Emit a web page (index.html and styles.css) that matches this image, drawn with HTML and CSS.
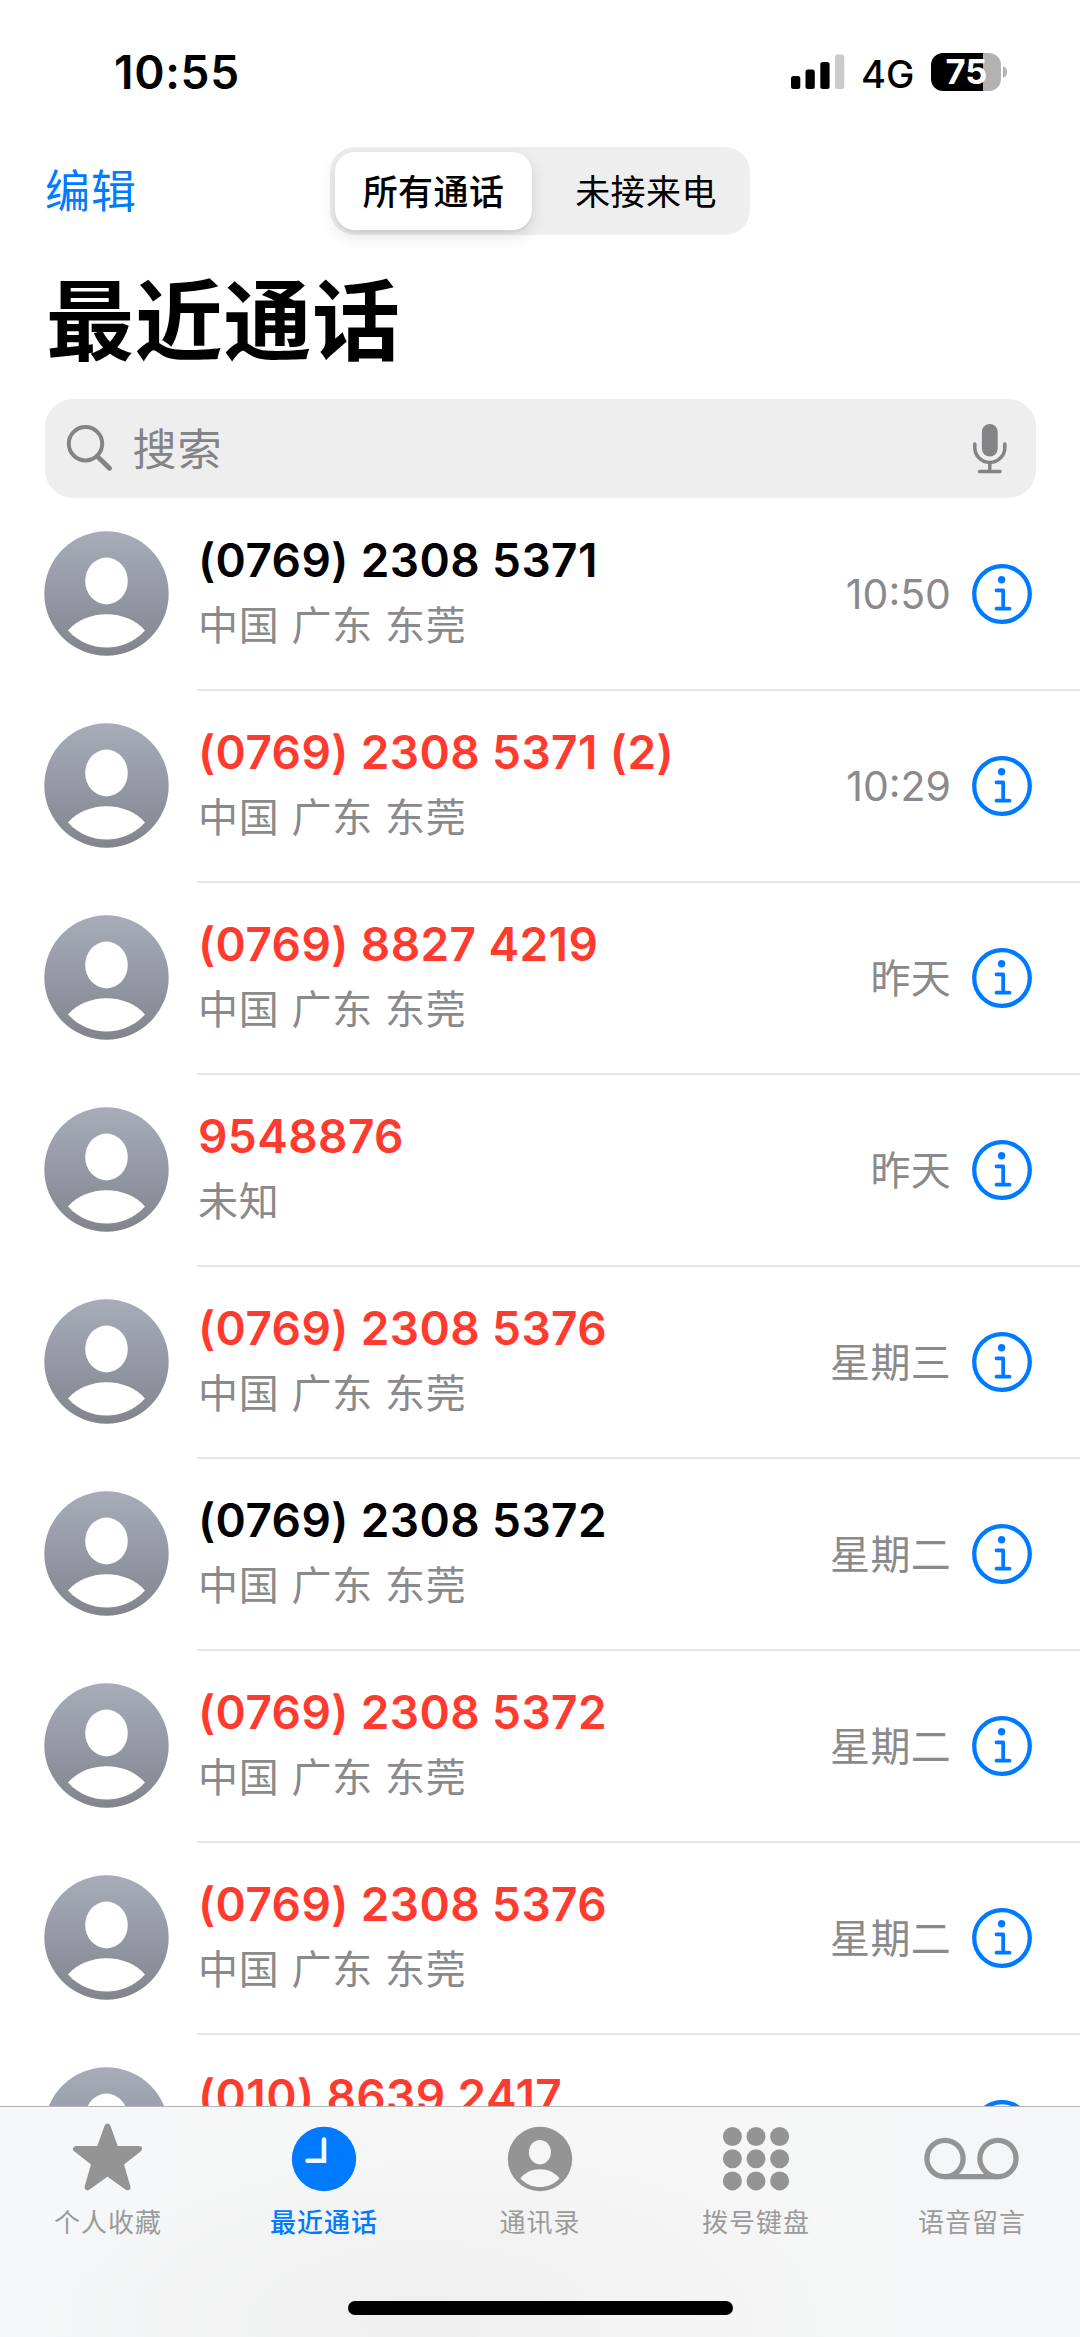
FILE: index.html
```
<!DOCTYPE html>
<html lang="zh-CN">
<head>
<meta charset="utf-8">
<title>最近通话</title>
<link rel="stylesheet" href="styles.css">
</head>
<body>
<svg class="defs" aria-hidden="true">
  <defs>
    <linearGradient id="avatar-fill" x1="0" y1="0" x2="0" y2="1">
      <stop offset="0" stop-color="#a6adb8"/>
      <stop offset="0.6" stop-color="#9194a1"/>
      <stop offset="1" stop-color="#83858d"/>
    </linearGradient>
    <symbol id="avatar" viewBox="0 0 125 125">
      <circle cx="62.5" cy="62.5" r="62.2" fill="url(#avatar-fill)"/>
      <ellipse cx="62.5" cy="50" rx="21.3" ry="23.4" fill="#fff"/>
      <path d="M24 99.5C33 89 47 83.2 62.5 83.2S92 89 101 99.5C91 110.5 77 116.5 62.5 116.5S34 110.5 24 99.5Z" fill="#fff"/>
    </symbol>
    <symbol id="info" viewBox="0 0 60 60">
      <circle cx="30" cy="30" r="27.8" fill="none" stroke="#007aff" stroke-width="4.3"/>
      <circle cx="29.6" cy="15.7" r="3.7" fill="#007aff"/>
      <path d="M24.5 26.3H31.2V44.7M24.5 44.7H37.5" fill="none" stroke="#007aff" stroke-width="3.8" stroke-linecap="round" stroke-linejoin="round"/>
    </symbol>
  </defs>
</svg>
<div class="screen">
  <header class="status">
    <span class="clock">10:55</span>
    <div class="indicators">
      <svg class="signal" viewBox="0 0 54 36">
        <rect x="0" y="22" width="9.3" height="13" rx="2.5"/>
        <rect x="14.5" y="15.5" width="9.3" height="19.5" rx="2.5"/>
        <rect x="29.3" y="8" width="9.3" height="27" rx="2.5"/>
        <rect x="44" y="0.5" width="9.3" height="34.5" rx="2.5" fill="#cbcbcb"/>
      </svg>
      <span class="network">4G</span>
      <div class="battery"><span class="battery-level">75</span></div>
      <svg class="battery-cap" viewBox="0 0 4 12"><path d="M0 0C2.5 1 4 3 4 6S2.5 11 0 12Z" fill="#b2b2b2"/></svg>
    </div>
  </header>

  <nav class="toolbar">
    <a class="edit">编辑</a>
    <div class="segments">
      <span class="segment selected">所有通话</span>
      <span class="segment">未接来电</span>
    </div>
  </nav>

  <h1 class="title">最近通话</h1>

  <div class="search">
    <svg class="search-icon" viewBox="0 0 48 48">
      <circle cx="20.5" cy="20.7" r="16.7"/>
      <path d="M32.5 33.5L44.5 45.2" stroke-width="5"/>
    </svg>
    <span class="search-text">搜索</span>
    <svg class="mic" viewBox="0 0 34 50">
      <rect x="8.9" y="0" width="15.8" height="32.5" rx="7.9"/>
      <path d="M1.8 20V23.5A15 15 0 0 0 31.8 23.5V20M16.8 38.5V47M6.5 47.5H27"/>
    </svg>
  </div>

  <main class="calls">
    <div class="call"><svg class="avatar"><use href="#avatar"/></svg><div class="entry"><div class="who"><span class="number">(0769) 2308 5371</span><span class="place">中国 广东 东莞</span></div><span class="when">10:50</span><svg class="info"><use href="#info"/></svg></div></div>
    <div class="call missed"><svg class="avatar"><use href="#avatar"/></svg><div class="entry"><div class="who"><span class="number">(0769) 2308 5371 (2)</span><span class="place">中国 广东 东莞</span></div><span class="when">10:29</span><svg class="info"><use href="#info"/></svg></div></div>
    <div class="call missed"><svg class="avatar"><use href="#avatar"/></svg><div class="entry"><div class="who"><span class="number">(0769) 8827 4219</span><span class="place">中国 广东 东莞</span></div><span class="when day">昨天</span><svg class="info"><use href="#info"/></svg></div></div>
    <div class="call missed"><svg class="avatar"><use href="#avatar"/></svg><div class="entry"><div class="who"><span class="number">9548876</span><span class="place">未知</span></div><span class="when day">昨天</span><svg class="info"><use href="#info"/></svg></div></div>
    <div class="call missed"><svg class="avatar"><use href="#avatar"/></svg><div class="entry"><div class="who"><span class="number">(0769) 2308 5376</span><span class="place">中国 广东 东莞</span></div><span class="when day">星期三</span><svg class="info"><use href="#info"/></svg></div></div>
    <div class="call"><svg class="avatar"><use href="#avatar"/></svg><div class="entry"><div class="who"><span class="number">(0769) 2308 5372</span><span class="place">中国 广东 东莞</span></div><span class="when day">星期二</span><svg class="info"><use href="#info"/></svg></div></div>
    <div class="call missed"><svg class="avatar"><use href="#avatar"/></svg><div class="entry"><div class="who"><span class="number">(0769) 2308 5372</span><span class="place">中国 广东 东莞</span></div><span class="when day">星期二</span><svg class="info"><use href="#info"/></svg></div></div>
    <div class="call missed"><svg class="avatar"><use href="#avatar"/></svg><div class="entry"><div class="who"><span class="number">(0769) 2308 5376</span><span class="place">中国 广东 东莞</span></div><span class="when day">星期二</span><svg class="info"><use href="#info"/></svg></div></div>
    <div class="call missed"><svg class="avatar"><use href="#avatar"/></svg><div class="entry"><div class="who"><span class="number">(010) 8639 2417</span></div><svg class="info"><use href="#info"/></svg></div></div>
  </main>

  <footer class="dock">
    <div class="tabs">
      <div class="tab">
        <svg class="tab-icon" viewBox="0 0 92 72">
          <path d="M45.500 6.500L53.600 29H77L58.600 43.400L65.500 67.300L45.500 53L25.500 67.300L32.400 43.400L14 29H37.400Z" fill="#949494" stroke="#949494" stroke-width="6" stroke-linejoin="round"/>
        </svg>
        <span>个人收藏</span>
      </div>
      <div class="tab active">
        <svg class="tab-icon" viewBox="0 0 92 72">
          <circle cx="46" cy="39" r="32.2" fill="#007aff"/>
          <path d="M46 19.5V40.7H29.5" fill="none" stroke="#f7f7f7" stroke-width="4.6" stroke-linecap="round" stroke-linejoin="miter"/>
        </svg>
        <span>最近通话</span>
      </div>
      <div class="tab">
        <svg class="tab-icon" viewBox="0 0 92 72">
          <circle cx="46" cy="39" r="32.2" fill="#949494"/>
          <ellipse cx="45.9" cy="32.2" rx="11" ry="12.2" fill="#f6f6f6"/>
          <path d="M26.3 58.4C31 52.5 38 49.3 45.9 49.3S61 52.5 65.5 58.4C60 64.2 53 67 45.9 67S32 64.2 26.3 58.4Z" fill="#f6f6f6"/>
        </svg>
        <span>通讯录</span>
      </div>
      <div class="tab">
        <svg class="tab-icon" viewBox="0 0 92 72" fill="#949494">
          <circle cx="22.4" cy="16.5" r="9.5"/><circle cx="46" cy="16.5" r="9.5"/><circle cx="69.6" cy="16.5" r="9.5"/>
          <circle cx="22.4" cy="38.7" r="9.5"/><circle cx="46" cy="38.7" r="9.5"/><circle cx="69.6" cy="38.7" r="9.5"/>
          <circle cx="22.4" cy="60.9" r="9.5"/><circle cx="46" cy="60.9" r="9.5"/><circle cx="69.6" cy="60.9" r="9.5"/>
        </svg>
        <span>拨号键盘</span>
      </div>
      <div class="tab">
        <svg class="tab-icon" viewBox="0 0 92 72" fill="none" stroke="#949494" stroke-width="5.3">
          <circle cx="19" cy="38.5" r="18.1"/><circle cx="72" cy="38.5" r="18.1"/><path d="M19 56.6H72"/>
        </svg>
        <span>语音留言</span>
      </div>
    </div>
    <div class="home-indicator"></div>
  </footer>
</div>
</body>
</html>
```
FILE: styles.css
```
* { box-sizing: border-box; }

body {
  margin: 0;
  background: #fff;
  color: #000;
  font-family: Inter, "Noto Sans CJK SC", sans-serif;
}

svg { display: block; flex: none; }

.defs { position: absolute; width: 0; height: 0; }

.screen {
  display: flex;
  flex-direction: column;
  width: 1080px;
  height: 2337px;
  overflow: hidden;
}

/* Status bar */
.status {
  display: flex;
  justify-content: space-between;
  align-items: center;
  height: 144px;
  padding: 0 73px 0 114px;
  flex: none;
}

.clock {
  font-size: 46px;
  font-weight: 600;
  line-height: 56px;
  letter-spacing: 0.7px;
}

.indicators { display: flex; align-items: center; }

.signal { width: 54px; height: 36px; }

.network {
  width: 53px;
  margin: 3px 0 0 16px;
  font-size: 38px;
  font-weight: 500;
  line-height: 46px;
}

.battery {
  width: 70px;
  height: 38px;
  margin-left: 17px;
  border-radius: 12px;
  background: linear-gradient(90deg, #000 52px, #b2b2b2 52px);
  color: #fff;
  text-align: center;
}

.battery-level {
  padding-left: 1px;
  font-size: 34.5px;
  font-weight: 700;
  line-height: 38px;
}

.battery-cap { width: 4px; height: 12px; margin-left: 2px; }

/* Edit button and filter */
.toolbar {
  display: grid;
  grid-template-columns: 285px 420px;
  align-items: center;
  height: 88px;
  margin: 3px 0 0 45px;
  flex: none;
}

.edit {
  padding-top: 2px;
  color: #007aff;
  font-size: 45px;
  line-height: 60px;
  letter-spacing: 1px;
}

.segments {
  display: grid;
  grid-template-columns: 197px 1fr;
  height: 88px;
  padding: 5px;
  border-radius: 25px;
  background: #eee;
}

.segment {
  padding-left: 15px;
  border-radius: 20px;
  font-size: 35px;
  line-height: 80px;
  letter-spacing: 0.4px;
  text-align: center;
}

.segment.selected {
  height: 78px;
  padding-left: 0;
  background: #fff;
  font-weight: 500;
  box-shadow: 0 6px 16px rgba(0, 0, 0, 0.12), 0 3px 2px rgba(0, 0, 0, 0.04);
}

.title {
  margin: 32px 0 23px 46px;
  font-size: 88px;
  font-weight: 700;
  line-height: 109px;
  letter-spacing: 0.7px;
  flex: none;
}

/* Search field */
.search {
  display: flex;
  align-items: center;
  height: 99px;
  margin: 0 44px 0 45px;
  padding: 0 29px 0 19.5px;
  border-radius: 28px;
  background: #eee;
  color: #848486;
  flex: none;
}

.search-icon {
  width: 48px;
  height: 48px;
  margin-bottom: 3px;
  fill: none;
  stroke: #848486;
  stroke-width: 4;
  stroke-linecap: round;
}

.search-text {
  flex: 1;
  margin-left: 20px;
  padding-top: 3px;
  font-size: 44px;
  line-height: 60px;
  letter-spacing: 1px;
}

.mic { width: 34px; height: 50px; overflow: visible; fill: #848486; }

.mic path {
  fill: none;
  stroke: #848486;
  stroke-width: 3.5;
  stroke-linecap: round;
}

/* Call list */
.calls {
  flex: 1;
  min-height: 0;
  padding-top: 1px;
  overflow: hidden;
}

.call {
  display: flex;
  align-items: center;
  height: 192px;
  padding-left: 44px;
}

.avatar { width: 125px; height: 125px; margin-bottom: 3px; }

.entry {
  display: flex;
  flex: 1;
  align-items: center;
  height: 192px;
  margin-left: 28px;
  padding-right: 48px;
  border-bottom: 2px solid #e4e4e5;
}

.who {
  display: flex;
  flex: 1;
  flex-direction: column;
  height: 130px;
  margin-bottom: 1px;
  padding-left: 1px;
}

.number {
  margin: -2px 0 1px;
  font-size: 46px;
  font-weight: 600;
  line-height: 66px;
  letter-spacing: 0.4px;
}

.missed .number { color: #ff3b30; }

.place {
  color: #8a8a8c;
  font-size: 40px;
  line-height: 64px;
  letter-spacing: 0.75px;
}

.when {
  margin-right: 21px;
  color: #8a8a8c;
  font-size: 41px;
  line-height: 60px;
}

.when.day { padding-top: 1px; font-size: 40px; letter-spacing: 0.3px; }

.info { width: 60px; height: 60px; }

/* Tab bar */
.dock {
  height: 231px;
  flex: none;
  border-top: 1px solid #b4b4b5;
  background:
    radial-gradient(ellipse 420px 190px at 420px 215px, rgba(238, 238, 238, 0.9), rgba(240, 240, 240, 0)),
    linear-gradient(90deg, #f5f7f9, #f7f7f7 30%, #f6f6f6 70%, #f4f6f8);
}

.tabs { display: grid; grid-template-columns: repeat(5, 1fr); height: 194px; padding-top: 13px; }

.tab {
  display: flex;
  flex-direction: column;
  align-items: center;
  color: #9b9b9b;
  font-size: 26px;
  line-height: 36px;
  letter-spacing: 1px;
}

.tab span { margin-top: 13px; }

.tab-icon { width: 92px; height: 72px; overflow: visible; }

.tab.active { color: #007aff; font-weight: 500; }

.home-indicator {
  width: 385px;
  height: 14px;
  margin: 0 auto;
  border-radius: 7px;
  background: #000;
}
```
